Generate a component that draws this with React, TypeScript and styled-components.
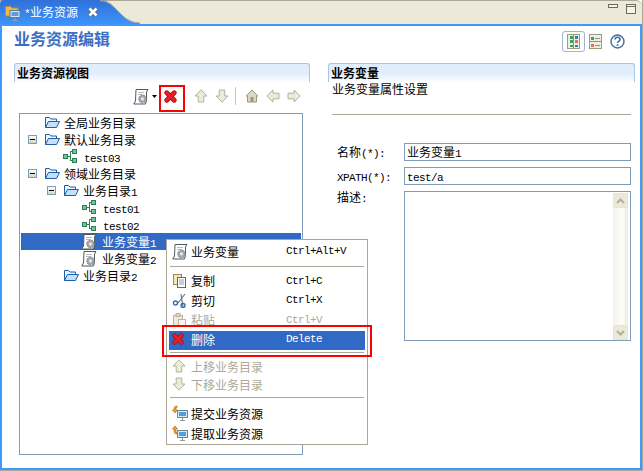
import React from "react";
import styled, { createGlobalStyle } from "styled-components";

const Global = createGlobalStyle`
  html, body { margin: 0; padding: 0; background: #fff; }
  body { font-family: "Noto Sans CJK SC", "Liberation Sans", sans-serif; font-size: 12px; color: #000; }
`;

const Root = styled.div`
  position: relative;
  width: 643px;
  height: 471px;
  box-sizing: border-box;
  overflow: hidden;
  background: #fff;
  border-right: 1px solid #aca899;
  border-bottom: 1px solid #aca899;
  display: flex;
  flex-direction: column;
`;
const TabBar = styled.div`
  height: 24px;
  flex: none;
  display: flex;
  background: #ece9d8;
  border-top: 1px solid #aca899;
  box-sizing: border-box;
  border-top-right-radius: 6px;
`;
const Tab = styled.div`
  width: 100px;
  margin-top: -1px;
  height: 24px;
  flex: none;
  box-sizing: border-box;
  padding: 0 0 0 5px;
  display: flex;
  align-items: center;
  background: linear-gradient(#2f70da, #3d93fa);
  border-top-left-radius: 4px;
  color: #fff;
  gap: 3px;
`;
const TabTitle = styled.span`
  font-size: 12px;
  line-height: 14px;
  margin-top: 1px;
  white-space: nowrap;
`;
const TabClose = styled.span`
  margin-left: 7px;
  display: flex;
`;
const TabCurve = styled.svg`
  flex: none;
  margin-top: -1px;
  display: block;
`;
const WindowButtons = styled.div`
  margin-left: auto;
  margin-right: 6px;
  display: flex;
  gap: 8px;
  padding-top: 3px;
  align-items: flex-start;
`;
const Editor = styled.div`
  flex: 1;
  min-height: 0;
  background: #fff;
  border: 2px solid #3f97ff;
  display: flex;
  flex-direction: column;
  padding: 0 5px 0 12px;
`;
const TitleRow = styled.div`
  height: 37px;
  flex: none;
  display: flex;
  align-items: flex-start;
  justify-content: space-between;
`;
const Title = styled.h1`
  margin: 3px 0 0;
  font-size: 16px;
  line-height: 18px;
  font-weight: 700;
  color: #3a6fc4;
`;
const FormTools = styled.div`
  display: flex;
  align-items: center;
  gap: 4px;
  margin: 5px 6px 0 0;
`;
const ToggleBtn = styled.div<{ $on?: boolean }>`
  width: 23px;
  height: 21px;
  box-sizing: border-box;
  display: flex;
  align-items: center;
  justify-content: center;
  border-radius: 3px;
  border: 1px solid ${(p) => (p.$on ? "#9fb5c9" : "transparent")};
`;
const Columns = styled.div`
  flex: 1;
  display: grid;
  grid-template-columns: 296px 307px;
  column-gap: 18px;
`;
const Column = styled.section`
  display: flex;
  flex-direction: column;
  min-width: 0;
`;
const SectionHead = styled.h2`
  margin: 0;
  height: 19px;
  box-sizing: border-box;
  border: 1px solid #a9c4e6;
  border-bottom: none;
  border-radius: 3px 3px 0 0;
  background: linear-gradient(#e2edfc 55%, #fff);
  padding: 0 0 0 2px;
  font-size: 12px;
  line-height: 17px;
  font-weight: 700;
`;
const Toolbar = styled.div`
  height: 31px;
  padding: 0 6px 3px 0;
  box-sizing: border-box;
  display: flex;
  justify-content: flex-end;
  align-items: center;
`;
const ToolBtn = styled.div`
  width: 21px;
  height: 21px;
  display: flex;
  align-items: center;
  justify-content: center;
`;
const ToolDrop = styled.div`
  width: 8px;
  display: flex;
  align-items: center;
  margin-left: 1px;
`;
const ToolSep = styled.div`
  width: 1px;
  height: 18px;
  background: #c9c5b2;
  margin: 0 5px 0 3px;
`;
const Tree = styled.div`
  height: 342px;
  margin: 0 7px 0 5px;
  box-sizing: border-box;
  border: 1px solid #7f9db9;
  padding: 0 1px;
`;
const TreeRow = styled.div<{ $level: number; $selected?: boolean }>`
  height: 17px;
  box-sizing: border-box;
  padding-bottom: 1px;
  display: flex;
  align-items: center;
  padding-left: ${(p) => p.$level * 19 + 7}px;
  white-space: nowrap;
  background: ${(p) => (p.$selected ? "#316ac5" : "transparent")};
  color: ${(p) => (p.$selected ? "#fff" : "#000")};
`;
const Twisty = styled.span<{ $open?: boolean }>`
  width: 9px;
  height: 9px;
  flex: none;
  box-sizing: border-box;
  margin-right: 7px;
  position: relative;
  visibility: ${(p) => (p.$open ? "visible" : "hidden")};
  border: 1px solid #7b9ebd;
  background: linear-gradient(#fff, #d8d2bd);
  &::after {
    content: "";
    position: absolute;
    left: 1px;
    top: 3px;
    width: 5px;
    height: 1px;
    background: #000;
  }
`;
const TreeIcon = styled.span<{ $kind: string }>`
  width: 16px;
  flex: none;
  display: flex;
  margin-left: ${(p) => (p.$kind === "folder" ? "0" : "-1px")};
  margin-right: ${(p) => (p.$kind === "folder" ? "4px" : p.$kind === "node" ? "6px" : "5px")};
`;
const Mono = styled.span`
  font-family: "Liberation Mono", monospace;
  font-size: 11px;
  letter-spacing: -0.6px;
`;
const Description = styled.p`
  margin: 0;
  padding-left: 4px;
  line-height: 14px;
`;
const Rule = styled.hr`
  margin: 18px 4px 0;
  border: none;
  height: 1px;
  background: #aca899;
`;
const Form = styled.div`
  margin: 28px 4px 0 9px;
  display: grid;
  grid-template-columns: 67px 227px;
  grid-template-rows: 18px 18px 150px;
  row-gap: 6px;
`;
const Label = styled.label`
  line-height: 18px;
  white-space: nowrap;
`;
const TopLabel = styled(Label)`
  line-height: 12px;
`;
const TextField = styled.div`
  box-sizing: border-box;
  border: 1px solid #7f9db9;
  padding-left: 2px;
  line-height: 16px;
  white-space: nowrap;
`;
const TextArea = styled.div`
  box-sizing: border-box;
  border: 1px solid #7f9db9;
  display: flex;
  justify-content: flex-end;
`;
const ScrollTrack = styled.div`
  width: 15px;
  margin: 1px 2px 0 0;
  background: linear-gradient(90deg, #f3f2ec, #fdfdfa 60%, #ecebe3);
  display: flex;
  flex-direction: column;
  justify-content: space-between;
`;
const ScrollBtn = styled.div`
  height: 15px;
  box-sizing: border-box;
  border: 1px solid #e6e4d8;
  border-radius: 2px;
  background: #ece9d8;
  display: flex;
  align-items: center;
  justify-content: center;
`;
const Menu = styled.div`
  position: absolute;
  left: 166px;
  top: 239px;
  width: 202px;
  height: 206px;
  box-sizing: border-box;
  padding: 2px 2px 0;
  border: 1px solid #aca899;
  background: #fff;
`;
const MenuItem = styled.div<{ $h: number; $active?: boolean; $disabled?: boolean }>`
  height: ${(p) => p.$h}px;
  box-sizing: border-box;
  padding: 0 0 2px 3px;
  display: flex;
  align-items: center;
  white-space: nowrap;
  background: ${(p) => (p.$active ? "#316ac5" : "transparent")};
  color: ${(p) => (p.$active ? "#fff" : p.$disabled ? "#aca899" : "#000")};
`;
const MenuIcon = styled.span`
  width: 16px;
  margin-right: 3px;
  flex: none;
  display: flex;
`;
const MenuLabel = styled.span`
  width: 95px;
  flex: none;
`;
const MenuSep = styled.div<{ $before: number; $after: number }>`
  height: 1px;
  margin: ${(p) => p.$before}px 1px ${(p) => p.$after}px;
  background: #aca899;
`;
const Callout = styled.div<{ $l: number; $t: number; $w: number; $h: number }>`
  position: absolute;
  left: ${(p) => p.$l}px;
  top: ${(p) => p.$t}px;
  width: ${(p) => p.$w}px;
  height: ${(p) => p.$h}px;
  box-sizing: border-box;
  border: 2px solid #f00;
  pointer-events: none;
`;
const Ico = styled.svg`
  display: block;
  flex: none;
`;

const FolderOpen = () => (
  <Ico width="16" height="14" viewBox="0 0 16 14">
    <path d="M1.5 12.5V2.5h4l1.5 1.5h5.5v2.5" fill="#eaf4fd" stroke="#1d5fa8" />
    <path d="M1.5 12.5L4.5 6.5h11l-3 6z" fill="#c5e0f8" stroke="#1d5fa8" />
  </Ico>
);
const NodeIcon = () => (
  <Ico width="16" height="16" viewBox="0 0 16 16" shapeRendering="crispEdges">
    <path d="M5 8.5h3M8.5 4v9M8 3.5h3M8 12.5h3" stroke="#2f7f55" fill="none" />
    <rect x="1.5" y="6.5" width="4" height="4" fill="#76c59a" stroke="#2f7f55" />
    <rect x="10.5" y="1.5" width="4" height="4" fill="#76c59a" stroke="#2f7f55" />
    <rect x="10.5" y="10.5" width="4" height="4" fill="#76c59a" stroke="#2f7f55" />
  </Ico>
);
const ScrollGear = () => (
  <Ico width="16" height="17" viewBox="0 0 16 17">
    <path d="M3 1.5h12l-1.5 2.5v8.5l-1 3.5H.8l1.7-3z" fill="#fff" stroke="#4f5a64" />
    <path d="M5 4.5h6M5 6.5h5" stroke="#b4bcc2" />
    <circle cx="9.5" cy="11" r="3.8" fill="#a6abb0" stroke="#6c7278" strokeDasharray="1.6 1" />
    <circle cx="9.5" cy="11" r="1.4" fill="#eee" />
  </Ico>
);
const RedX = ({ size = 13 }: { size?: number }) => (
  <Ico width={size} height={size} viewBox="0 0 14 14">
    <path d="M3 3l8 8M11 3l-8 8" stroke="#a80f14" strokeWidth="5.2" strokeLinecap="round" />
    <path d="M3 3l8 8M11 3l-8 8" stroke="#ee1c24" strokeWidth="3.4" strokeLinecap="round" />
  </Ico>
);
const Arrow = ({ dir }: { dir: "up" | "down" | "left" | "right" }) => {
  const rot = { up: 0, right: 90, down: 180, left: 270 }[dir];
  return (
    <Ico width="14" height="14" viewBox="0 0 14 14">
      <path
        d="M7 .8L13 7H9.8v6H4.2V7H1z"
        fill="#ecead9"
        stroke="#b5b19e"
        transform={`rotate(${rot} 7 7)`}
      />
    </Ico>
  );
};
const Home = () => (
  <Ico width="14" height="14" viewBox="0 0 14 14">
    <path d="M7 1L13 7h-1.5v6h-9V7H1z" fill="#dcd8c4" stroke="#9b9781" />
    <rect x="5.5" y="8" width="3" height="5" fill="#9b9781" />
  </Ico>
);
const Caret = () => (
  <Ico width="5" height="3" viewBox="0 0 5 3">
    <path d="M0 0h5L2.5 3z" fill="#000" />
  </Ico>
);
const Layout1 = () => (
  <Ico width="13" height="15" viewBox="0 0 13 15" shapeRendering="crispEdges">
    <rect x=".5" y=".5" width="12" height="14" fill="#efeee2" stroke="#9d9a80" />
    <path d="M6.5 1v13" stroke="#7c96ad" />
    <rect x="2.5" y="2" width="3" height="2.5" fill="#3aa35f" />
    <rect x="2.5" y="6" width="3" height="2.5" fill="#3aa35f" />
    <rect x="2.5" y="10.5" width="3" height="2.5" fill="#3aa35f" />
    <rect x="8" y="2" width="3" height="2.5" fill="#3b78b8" />
    <rect x="8" y="6" width="3" height="2.5" fill="#e5705c" />
    <rect x="8" y="10.5" width="3" height="2.5" fill="#3b78b8" />
  </Ico>
);
const Layout2 = () => (
  <Ico width="13" height="15" viewBox="0 0 13 15" shapeRendering="crispEdges">
    <rect x=".5" y=".5" width="12" height="14" fill="#efeee2" stroke="#9d9a80" />
    <path d="M1 7.5h11" stroke="#7c96ad" />
    <rect x="2" y="2.5" width="3" height="3" fill="#3aa35f" />
    <path d="M6 4h5" stroke="#7c96ad" />
    <rect x="2" y="9.5" width="3" height="3" fill="#e5705c" />
    <path d="M6 11h5" stroke="#7c96ad" />
  </Ico>
);
const Help = () => (
  <Ico width="15" height="15" viewBox="0 0 15 15">
    <circle cx="7.5" cy="7.5" r="6.5" fill="#fff" stroke="#3a6f9e" strokeWidth="1.4" />
    <path d="M5 5.5c.3-3 5-3 5 0 0 1.8-2.5 1.8-2.5 3.6" fill="none" stroke="#3a6f9e" strokeWidth="1.6" />
    <rect x="6.7" y="10.2" width="1.7" height="1.7" fill="#3a6f9e" />
  </Ico>
);
const TabIcon = () => (
  <Ico width="16" height="17" viewBox="0 0 16 17">
    <path d="M.5 12V2.5h5l1.5 1.5h6v8z" fill="#f2b84a" stroke="#b98a2e" />
    <rect x="5" y="6.5" width="10" height="7" fill="#d6e6f2" stroke="#5a7a92" />
    <rect x="6.5" y="8" width="7" height="4" fill="#5b9fd6" />
    <path d="M10 13.5V16M7.5 16.5h5" stroke="#8fa3b2" />
  </Ico>
);
const WhiteX = () => (
  <Ico width="10" height="10" viewBox="0 0 10 10">
    <path d="M1.5 1.5l7 7M8.5 1.5l-7 7" stroke="#5a6270" strokeWidth="4" />
    <path d="M1.5 1.5l7 7M8.5 1.5l-7 7" stroke="#fff" strokeWidth="2.6" />
  </Ico>
);
const Minimize = () => (
  <Ico width="10" height="4" viewBox="0 0 10 4" shapeRendering="crispEdges">
    <rect x=".5" y=".5" width="9" height="3" fill="#f6f4ea" stroke="#6b6a5e" />
  </Ico>
);
const Maximize = () => (
  <Ico width="10" height="10" viewBox="0 0 10 10" shapeRendering="crispEdges">
    <rect x=".5" y=".5" width="9" height="9" fill="#f6f4ea" stroke="#6b6a5e" />
    <path d="M1 2.5h8" stroke="#6b6a5e" />
  </Ico>
);
const Copy = () => (
  <Ico width="15" height="15" viewBox="0 0 15 15">
    <rect x="1.5" y="1.5" width="8" height="10" fill="#f6e6b8" stroke="#9a8a5a" />
    <rect x="5.5" y="4.5" width="8" height="10" fill="#fff" stroke="#3f6f9f" />
    <path d="M7 7h5M7 9h5M7 11h5" stroke="#7fa0c0" />
  </Ico>
);
const Cut = () => (
  <Ico width="15" height="15" viewBox="0 0 15 15">
    <path d="M13 1L6 10M9 1l2 13" stroke="#6f7780" strokeWidth="1.2" fill="none" />
    <circle cx="3.5" cy="10" r="2" fill="none" stroke="#2f6fb0" strokeWidth="1.4" />
    <circle cx="11" cy="12.5" r="2" fill="none" stroke="#2f6fb0" strokeWidth="1.4" />
  </Ico>
);
const Paste = () => (
  <Ico width="15" height="15" viewBox="0 0 15 15">
    <rect x="1.5" y="3.5" width="9" height="10" fill="#eeeade" stroke="#b9b5a2" />
    <rect x="4" y="1.5" width="4" height="3" fill="#d8d4c2" stroke="#b9b5a2" />
    <rect x="6.5" y="7.5" width="7" height="7" fill="#f7f6f0" stroke="#b9b5a2" />
  </Ico>
);
const Sync = ({ flip }: { flip?: boolean }) => (
  <Ico width="16" height="16" viewBox="0 0 16 16">
    <rect x="5.5" y="5.5" width="10" height="7" fill="#dce8f0" stroke="#6f8596" />
    <rect x="7" y="7" width="7" height="4" fill="#4f9fdc" />
    <path d="M10.5 13v2M8 15.5h5" stroke="#8a98a4" />
    <path
      d={flip ? "M3 1L.5 4H2v3c0 1 1 2 3 2V7.5C4 7.5 4 7 4 6.5V4h1.5z" : "M3 8L.5 5H2V3c0-1 1-2 3-2v1.5C4 2.5 4 3 4 3.5V5h1.5z"}
      fill="#f0a030"
      stroke="#a8651a"
      strokeWidth=".6"
    />
  </Ico>
);
const MiniChevron = ({ down }: { down?: boolean }) => (
  <Ico width="9" height="6" viewBox="0 0 9 6">
    <path d={down ? "M1 1l3.5 3.5L8 1" : "M1 5l3.5-3.5L8 5"} fill="none" stroke="#b3b09c" strokeWidth="2" />
  </Ico>
);

type Node = { level: number; open?: boolean; icon: "folder" | "node" | "scroll"; text: React.ReactNode; selected?: boolean };
const nodes: Node[] = [
  { level: 0, icon: "folder", text: "全局业务目录" },
  { level: 0, open: true, icon: "folder", text: "默认业务目录" },
  { level: 1, icon: "node", text: <Mono>test03</Mono> },
  { level: 0, open: true, icon: "folder", text: "领域业务目录" },
  { level: 1, open: true, icon: "folder", text: <>业务目录<Mono>1</Mono></> },
  { level: 2, icon: "node", text: <Mono>test01</Mono> },
  { level: 2, icon: "node", text: <Mono>test02</Mono> },
  { level: 2, icon: "scroll", selected: true, text: <>业务变量<Mono>1</Mono></> },
  { level: 2, icon: "scroll", text: <>业务变量<Mono>2</Mono></> },
  { level: 1, icon: "folder", text: <>业务目录<Mono>2</Mono></> },
];

export default function App() {
  return (
    <Root>
      <Global />
      <TabBar>
        <Tab>
          <TabIcon />
          <TabTitle><Mono>*</Mono>业务资源</TabTitle>
          <TabClose><WhiteX /></TabClose>
        </Tab>
        <TabCurve width="40" height="24" viewBox="0 0 40 24">
          <defs>
            <linearGradient id="tabgrad" x1="0" y1="0" x2="0" y2="1">
              <stop offset="0" stopColor="#2f70da" />
              <stop offset="1" stopColor="#3d93fa" />
            </linearGradient>
          </defs>
          <path d="M0 0C16 0 20 23 40 23V24H0Z" fill="url(#tabgrad)" />
          <path d="M0 .5C16 .5 20 23 40 23" fill="none" stroke="#aca899" />
        </TabCurve>
        <WindowButtons>
          <Minimize />
          <Maximize />
        </WindowButtons>
      </TabBar>
      <Editor>
        <TitleRow>
          <Title>业务资源编辑</Title>
          <FormTools>
            <ToggleBtn $on><Layout1 /></ToggleBtn>
            <Layout2 />
            <ToggleBtn><Help /></ToggleBtn>
          </FormTools>
        </TitleRow>
        <Columns>
          <Column>
            <SectionHead>业务资源视图</SectionHead>
            <Toolbar>
              <ToolBtn><ScrollGear /></ToolBtn>
              <ToolDrop><Caret /></ToolDrop>
              <ToolBtn><RedX /></ToolBtn>
              <ToolSep />
              <ToolBtn><Arrow dir="up" /></ToolBtn>
              <ToolBtn><Arrow dir="down" /></ToolBtn>
              <ToolSep />
              <ToolBtn><Home /></ToolBtn>
              <ToolBtn><Arrow dir="left" /></ToolBtn>
              <ToolBtn><Arrow dir="right" /></ToolBtn>
            </Toolbar>
            <Tree>
              {nodes.map((n, i) => (
                <TreeRow key={i} $level={n.level} $selected={n.selected}>
                  <Twisty $open={n.open} />
                  <TreeIcon $kind={n.icon}>
                    {n.icon === "folder" ? <FolderOpen /> : n.icon === "node" ? <NodeIcon /> : <ScrollGear />}
                  </TreeIcon>
                  <span>{n.text}</span>
                </TreeRow>
              ))}
            </Tree>
          </Column>
          <Column>
            <SectionHead>业务变量</SectionHead>
            <Description>业务变量属性设置</Description>
            <Rule />
            <Form>
              <Label>名称<Mono>(*):</Mono></Label>
              <TextField>业务变量<Mono>1</Mono></TextField>
              <Label><Mono>XPATH(*):</Mono></Label>
              <TextField><Mono>test/a</Mono></TextField>
              <TopLabel>描述<Mono>:</Mono></TopLabel>
              <TextArea>
                <ScrollTrack>
                  <ScrollBtn><MiniChevron /></ScrollBtn>
                  <ScrollBtn><MiniChevron down /></ScrollBtn>
                </ScrollTrack>
              </TextArea>
            </Form>
          </Column>
        </Columns>
      </Editor>
      <Callout $l={159} $t={85} $w={26} $h={27} />
      <Menu>
        <MenuItem $h={20}>
          <MenuIcon><ScrollGear /></MenuIcon>
          <MenuLabel>业务变量</MenuLabel>
          <Mono>Ctrl+Alt+V</Mono>
        </MenuItem>
        <MenuSep $before={4} $after={5} />
        <MenuItem $h={19.5}>
          <MenuIcon><Copy /></MenuIcon>
          <MenuLabel>复制</MenuLabel>
          <Mono>Ctrl+C</Mono>
        </MenuItem>
        <MenuItem $h={19.5}>
          <MenuIcon><Cut /></MenuIcon>
          <MenuLabel>剪切</MenuLabel>
          <Mono>Ctrl+X</Mono>
        </MenuItem>
        <MenuItem $h={19.5} $disabled>
          <MenuIcon><Paste /></MenuIcon>
          <MenuLabel>粘贴</MenuLabel>
          <Mono>Ctrl+V</Mono>
        </MenuItem>
        <MenuItem $h={19.5} $active>
          <MenuIcon><RedX size={12} /></MenuIcon>
          <MenuLabel>删除</MenuLabel>
          <Mono>Delete</Mono>
        </MenuItem>
        <MenuSep $before={2} $after={5} />
        <MenuItem $h={18} $disabled>
          <MenuIcon><Arrow dir="up" /></MenuIcon>
          <MenuLabel>上移业务目录</MenuLabel>
        </MenuItem>
        <MenuItem $h={18} $disabled>
          <MenuIcon><Arrow dir="down" /></MenuIcon>
          <MenuLabel>下移业务目录</MenuLabel>
        </MenuItem>
        <MenuSep $before={3} $after={6} />
        <MenuItem $h={20}>
          <MenuIcon><Sync /></MenuIcon>
          <MenuLabel>提交业务资源</MenuLabel>
        </MenuItem>
        <MenuItem $h={20}>
          <MenuIcon><Sync flip /></MenuIcon>
          <MenuLabel>提取业务资源</MenuLabel>
        </MenuItem>
      </Menu>
      <Callout $l={162} $t={325} $w={210} $h={32} />
    </Root>
  );
}
